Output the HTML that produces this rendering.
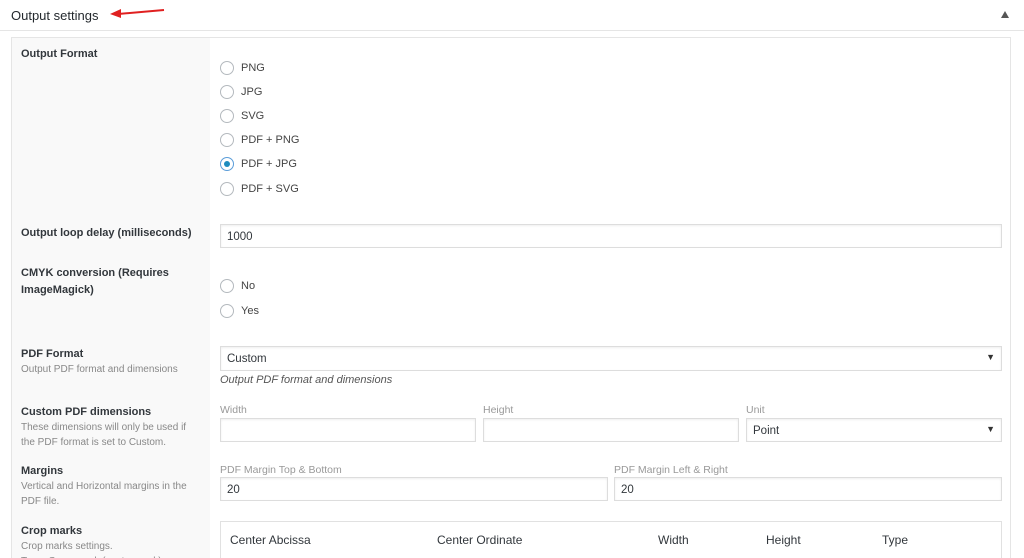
<!DOCTYPE html>
<html style="overflow:hidden;height:558px"><head><meta charset="utf-8"><style>
body{margin:0;width:1024px;height:558px;overflow:hidden;background:#fff;font-family:"Liberation Sans",sans-serif;color:#444;font-size:11.5px;position:relative}
.a{position:absolute}
.hdr{left:0;top:0;width:1024px;height:30px;border-bottom:1px solid #e5e5e5}
.title{left:11px;top:8px;font-size:13px;color:#23282d}
.box{left:11px;top:37px;width:998px;height:530px;border:1px solid #e5e5e5;background:#fff}
.lc{left:12px;top:38px;width:198px;height:520px;background:#f9f9f9}
.lab{font-weight:bold;color:#32373c;font-size:11px;left:21px;line-height:17px}
.desc{color:#888;font-size:10px;left:21px;line-height:15px}
.r{width:12px;height:12px;border:1px solid #b4b9be;border-radius:50%;background:#fff;left:220px}
.rl{left:241px;font-size:11px;color:#444}
.in{border:1px solid #ddd;background:#fff;box-shadow:inset 0 1px 2px rgba(0,0,0,.07);height:23px;box-sizing:border-box;font-size:11.5px;padding:6px 6px;color:#32373c}
.sm{color:#999;font-size:10.5px}
</style></head><body>
<div class="a hdr"></div>
<div class="a title">Output settings</div>
<svg class="a" style="left:110px;top:7px" width="56" height="12"><line x1="8" y1="7" x2="54" y2="3" stroke="#e02020" stroke-width="2"/><polygon points="0,7 11,2 11,11" fill="#e02020"/></svg>
<div class="a" style="left:1001px;top:11px;width:0;height:0;border-left:4px solid transparent;border-right:4px solid transparent;border-bottom:7px solid #555"></div>
<div class="a box"></div>
<div class="a lc"></div>

<div class="a lab" style="top:46px">Output Format</div>
<div class="a r" style="top:61px"></div><div class="a rl" style="top:62px">PNG</div>
<div class="a r" style="top:85px"></div><div class="a rl" style="top:86px">JPG</div>
<div class="a r" style="top:109px"></div><div class="a rl" style="top:110px">SVG</div>
<div class="a r" style="top:133px"></div><div class="a rl" style="top:134px">PDF + PNG</div>
<div class="a r" style="top:157px;border-color:#5b9dd9"><div class="a" style="left:3px;top:3px;width:6px;height:6px;border-radius:50%;background:#1e8cbe"></div></div><div class="a rl" style="top:158px">PDF + JPG</div>
<div class="a r" style="top:182px"></div><div class="a rl" style="top:183px">PDF + SVG</div>

<div class="a lab" style="top:225px">Output loop delay (milliseconds)</div>
<div class="a in" style="left:220px;top:224px;width:782px;height:24px">1000</div>

<div class="a lab" style="top:265px">CMYK conversion (Requires<br>ImageMagick)</div>
<div class="a r" style="top:279px"></div><div class="a rl" style="top:280px">No</div>
<div class="a r" style="top:304px"></div><div class="a rl" style="top:305px">Yes</div>

<div class="a lab" style="top:346px">PDF Format</div>
<div class="a desc" style="top:362px">Output PDF format and dimensions</div>
<div class="a in" style="left:220px;top:346px;width:782px;height:25px">Custom<span class="a" style="right:6px;top:5px;font-size:9px;color:#333">▼</span></div>
<div class="a" style="left:220px;top:374px;font-style:italic;font-size:11px;color:#555">Output PDF format and dimensions</div>

<div class="a lab" style="top:404px">Custom PDF dimensions</div>
<div class="a desc" style="top:420px">These dimensions will only be used if<br>the PDF format is set to Custom.</div>
<div class="a sm" style="left:220px;top:404px">Width</div>
<div class="a in" style="left:220px;top:418px;width:256px;height:24px"></div>
<div class="a sm" style="left:483px;top:404px">Height</div>
<div class="a in" style="left:483px;top:418px;width:256px;height:24px"></div>
<div class="a sm" style="left:746px;top:404px">Unit</div>
<div class="a in" style="left:746px;top:418px;width:256px;height:24px">Point<span class="a" style="right:6px;top:5px;font-size:9px;color:#333">▼</span></div>

<div class="a lab" style="top:463px">Margins</div>
<div class="a desc" style="top:479px">Vertical and Horizontal margins in the<br>PDF file.</div>
<div class="a sm" style="left:220px;top:464px">PDF Margin Top &amp; Bottom</div>
<div class="a in" style="left:220px;top:477px;width:388px;height:24px">20</div>
<div class="a sm" style="left:614px;top:464px">PDF Margin Left &amp; Right</div>
<div class="a in" style="left:614px;top:477px;width:388px;height:24px">20</div>

<div class="a lab" style="top:523px">Crop marks</div>
<div class="a desc" style="top:539px">Crop marks settings.<br>Type: Cross mark (center mark)</div>
<div class="a" style="left:220px;top:521px;width:780px;height:40px;border:1px solid #e1e1e1;background:#fff;font-size:12px;color:#32373c">
<span class="a" style="left:9px;top:11px">Center Abcissa</span>
<span class="a" style="left:216px;top:11px">Center Ordinate</span>
<span class="a" style="left:437px;top:11px">Width</span>
<span class="a" style="left:545px;top:11px">Height</span>
<span class="a" style="left:661px;top:11px">Type</span>
</div>
</body></html>
